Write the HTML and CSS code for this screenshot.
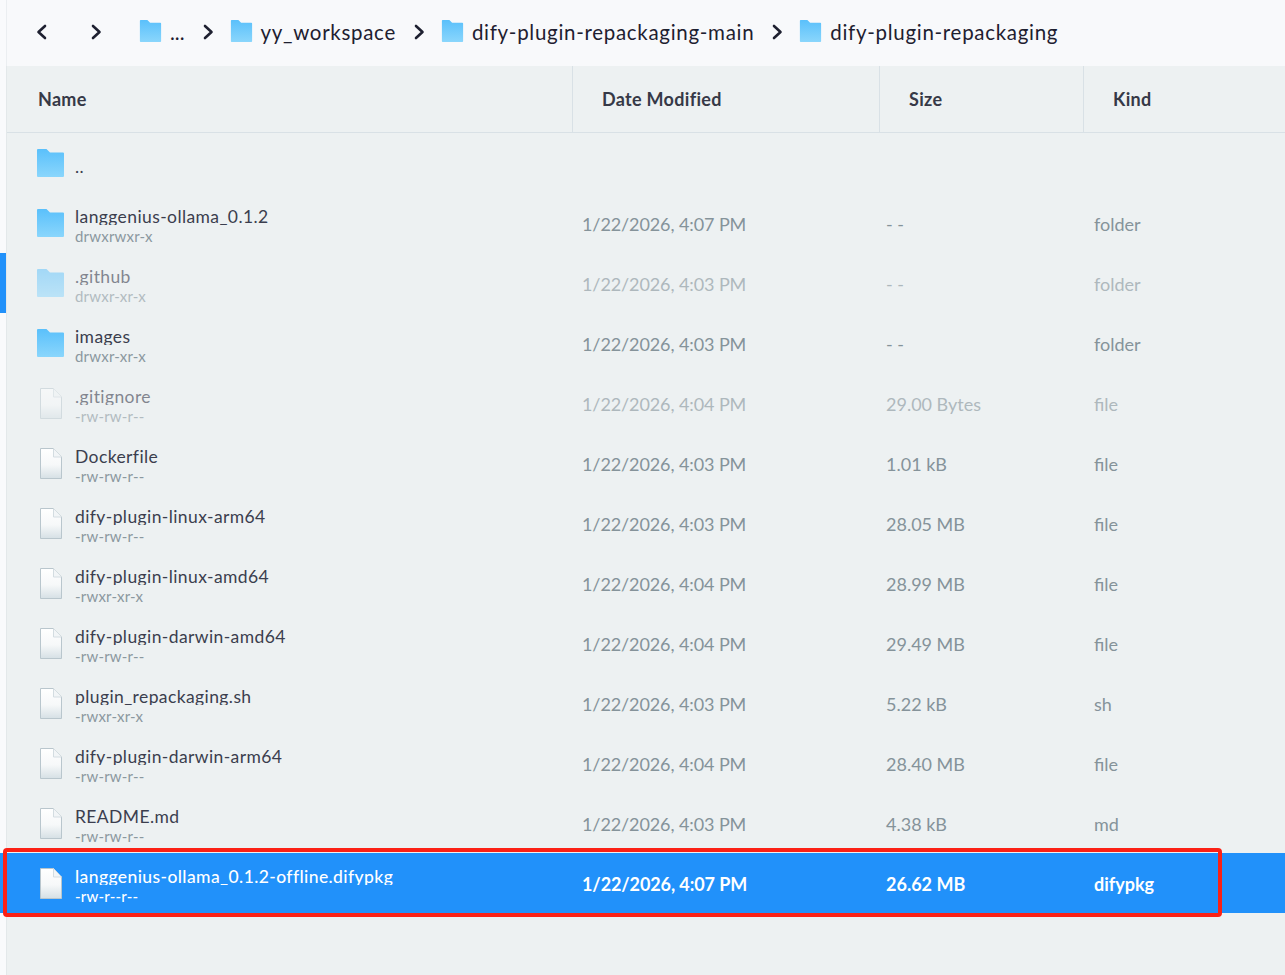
FILE: index.html
```html
<!DOCTYPE html>
<html lang="en">
<head>
<meta charset="utf-8">
<title>Files</title>
<link rel="stylesheet" href="styles.css">
</head>
<body>
<svg class="defs" width="0" height="0" aria-hidden="true">
  <defs>
    <linearGradient id="fg" x1="0" y1="0" x2="0" y2="1"><stop offset="0" stop-color="#5ac0fb"/><stop offset="1" stop-color="#8ad6fc"/></linearGradient>
    <linearGradient id="pg" x1="0" y1="0" x2="0" y2="1"><stop offset="0" stop-color="#ffffff"/><stop offset="0.55" stop-color="#f6f8f9"/><stop offset="1" stop-color="#d6e0e5"/></linearGradient>
    <symbol id="folder" viewBox="0 0 27 28"><path d="M1 0H9.500L13 3.500H26a1 1 0 0 1 1 1V27a1 1 0 0 1-1 1H1a1 1 0 0 1-1-1V1a1 1 0 0 1 1-1Z" fill="url(#fg)"/></symbol>
    <symbol id="file" viewBox="0 0 22 31"><path d="M.5.5H13.500L21.500 9V30.500H.5Z" fill="url(#pg)" stroke="#b9c6cd"/><path d="M13.500.5V9H21.500" fill="#f2f5f7" stroke="#d3dce1"/></symbol>
    <symbol id="chev" viewBox="0 0 12 16"><path d="M3 2L9.500 8L3 14" fill="none" stroke="currentColor" stroke-width="2.600" stroke-linecap="round" stroke-linejoin="round"/></symbol>
  </defs>
</svg>
<div class="app">
  <nav class="bar">
    <svg class="nav-btn back"><use href="#chev"/></svg>
    <svg class="nav-btn"><use href="#chev"/></svg>
    <div class="crumbs">
      <span class="crumb dots"><svg class="crumb-ic"><use href="#folder"/></svg>...</span>
      <svg class="sep"><use href="#chev"/></svg>
      <span class="crumb"><svg class="crumb-ic"><use href="#folder"/></svg>yy_workspace</span>
      <svg class="sep"><use href="#chev"/></svg>
      <span class="crumb"><svg class="crumb-ic"><use href="#folder"/></svg>dify-plugin-repackaging-main</span>
      <svg class="sep"><use href="#chev"/></svg>
      <span class="crumb"><svg class="crumb-ic"><use href="#folder"/></svg>dify-plugin-repackaging</span>
    </div>
  </nav>
  <main class="table">
    <header class="head">
      <div class="th">Name</div><div class="th">Date Modified</div><div class="th">Size</div><div class="th">Kind</div>
    </header>
    <div class="row">
      <div class="name"><svg class="ic-folder"><use href="#folder"/></svg><div class="label"><div class="fn">..</div></div></div>
      <div></div><div></div><div></div>
    </div>
    <div class="row">
      <div class="name"><svg class="ic-folder"><use href="#folder"/></svg><div class="label"><div class="fn">langgenius-ollama_0.1.2</div><div class="perm">drwxrwxr-x</div></div></div>
      <div class="cell">1/22/2026, 4:07 PM</div><div class="cell">- -</div><div class="cell">folder</div>
    </div>
    <div class="row dim active">
      <div class="name"><svg class="ic-folder"><use href="#folder"/></svg><div class="label"><div class="fn">.github</div><div class="perm">drwxr-xr-x</div></div></div>
      <div class="cell">1/22/2026, 4:03 PM</div><div class="cell">- -</div><div class="cell">folder</div>
    </div>
    <div class="row">
      <div class="name"><svg class="ic-folder"><use href="#folder"/></svg><div class="label"><div class="fn">images</div><div class="perm">drwxr-xr-x</div></div></div>
      <div class="cell">1/22/2026, 4:03 PM</div><div class="cell">- -</div><div class="cell">folder</div>
    </div>
    <div class="row dim">
      <div class="name"><svg class="ic-file"><use href="#file"/></svg><div class="label"><div class="fn">.gitignore</div><div class="perm">-rw-rw-r--</div></div></div>
      <div class="cell">1/22/2026, 4:04 PM</div><div class="cell">29.00 Bytes</div><div class="cell">file</div>
    </div>
    <div class="row">
      <div class="name"><svg class="ic-file"><use href="#file"/></svg><div class="label"><div class="fn">Dockerfile</div><div class="perm">-rw-rw-r--</div></div></div>
      <div class="cell">1/22/2026, 4:03 PM</div><div class="cell">1.01 kB</div><div class="cell">file</div>
    </div>
    <div class="row">
      <div class="name"><svg class="ic-file"><use href="#file"/></svg><div class="label"><div class="fn">dify-plugin-linux-arm64</div><div class="perm">-rw-rw-r--</div></div></div>
      <div class="cell">1/22/2026, 4:03 PM</div><div class="cell">28.05 MB</div><div class="cell">file</div>
    </div>
    <div class="row">
      <div class="name"><svg class="ic-file"><use href="#file"/></svg><div class="label"><div class="fn">dify-plugin-linux-amd64</div><div class="perm">-rwxr-xr-x</div></div></div>
      <div class="cell">1/22/2026, 4:04 PM</div><div class="cell">28.99 MB</div><div class="cell">file</div>
    </div>
    <div class="row">
      <div class="name"><svg class="ic-file"><use href="#file"/></svg><div class="label"><div class="fn">dify-plugin-darwin-amd64</div><div class="perm">-rw-rw-r--</div></div></div>
      <div class="cell">1/22/2026, 4:04 PM</div><div class="cell">29.49 MB</div><div class="cell">file</div>
    </div>
    <div class="row">
      <div class="name"><svg class="ic-file"><use href="#file"/></svg><div class="label"><div class="fn">plugin_repackaging.sh</div><div class="perm">-rwxr-xr-x</div></div></div>
      <div class="cell">1/22/2026, 4:03 PM</div><div class="cell">5.22 kB</div><div class="cell">sh</div>
    </div>
    <div class="row">
      <div class="name"><svg class="ic-file"><use href="#file"/></svg><div class="label"><div class="fn">dify-plugin-darwin-arm64</div><div class="perm">-rw-rw-r--</div></div></div>
      <div class="cell">1/22/2026, 4:04 PM</div><div class="cell">28.40 MB</div><div class="cell">file</div>
    </div>
    <div class="row">
      <div class="name"><svg class="ic-file"><use href="#file"/></svg><div class="label"><div class="fn">README.md</div><div class="perm">-rw-rw-r--</div></div></div>
      <div class="cell">1/22/2026, 4:03 PM</div><div class="cell">4.38 kB</div><div class="cell">md</div>
    </div>
    <div class="row selected">
      <div class="name"><svg class="ic-file"><use href="#file"/></svg><div class="label"><div class="fn">langgenius-ollama_0.1.2-offline.difypkg</div><div class="perm">-rw-r--r--</div></div></div>
      <div class="cell">1/22/2026, 4:07 PM</div><div class="cell">26.62 MB</div><div class="cell">difypkg</div>
      <div class="callout"></div>
    </div>
  </main>
</div>
</body>
</html>
```
FILE: styles.css
```css
* { box-sizing: border-box; }
html, body { margin: 0; height: 100%; }
body {
  background: #f9fafc;
  color: #2f3241;
  font-family: "Lato", "Noto Sans", sans-serif;
  overflow: hidden;
}
.defs { position: absolute; }
.app { height: 975px; display: flex; flex-direction: column; }

.bar {
  height: 66px;
  margin-left: 6px;
  border-left: 1px solid #ebeef1;
  display: flex;
  align-items: center;
  background: #f8f9fb;
  color: #1e2030;
  padding: 0 0 2px 29px;
}
.nav-btn { width: 12px; height: 16px; flex: none; margin-right: 37px; }
.nav-btn.back { transform: scaleX(-1); margin-right: 42px; }
.crumbs { display: flex; align-items: center; }
.crumb { display: flex; align-items: center; font-size: 20.500px; line-height: 26px; white-space: nowrap; letter-spacing: .7px; }
.crumb.dots { letter-spacing: 0; }
.crumb-ic { width: 23px; height: 22px; margin: -2px 8px 0 0; flex: none; }
.sep { width: 12px; height: 16px; margin: 0 16px 0 17px; flex: none; }

.table {
  flex: 1;
  margin-left: 6px;
  background: #edf1f2;
  border-left: 1px solid #e3e8ea;
}
.head, .row {
  display: grid;
  grid-template-columns: 565px 307px 204px 1fr;
}
.head { height: 67px; border-bottom: 1px solid #d9e1e6; }
.th {
  display: flex;
  align-items: center;
  padding-left: 29px;
  font-size: 18px;
  font-weight: 700;
  letter-spacing: .3px;
  color: #363947;
  border-left: 1px solid #d9e1e6;
}
.th:first-child { border-left: 0; padding-left: 31px; }

.row { height: 60px; position: relative; align-items: center; }
.name { display: flex; align-items: center; padding-left: 30px; height: 100%; }
.ic-folder { width: 27px; height: 28px; flex: none; margin-right: 11px; }
.ic-file { width: 22px; height: 31px; flex: none; margin: 0 13px 0 3px; }
.label { min-width: 0; padding-top: 5px; }
.fn { font-size: 17.500px; line-height: 20px; height: 18px; overflow: hidden; white-space: nowrap; color: #3b3e4e; letter-spacing: .4px; }
.perm { font-size: 15px; line-height: 18px; color: #8b989f; margin-top: 2px; white-space: nowrap; letter-spacing: .2px; }
.cell { padding: 1px 0 0 10px; font-size: 18px; color: #85939a; white-space: nowrap; }
.cell:nth-child(2) { letter-spacing: -.1px; }
.cell:nth-child(3) { padding-left: 7px; }
.cell:nth-child(4) { padding-left: 11px; }

.dim .fn, .dim .perm, .dim .cell { opacity: .6; }
.dim svg { opacity: .5; }
.active { margin-left: -7px; padding-left: 7px; box-shadow: inset 6px 0 0 #2191fa; }

.selected { margin-left: -7px; padding-left: 7px; background: #2191fa; }
.selected .fn, .selected .perm, .selected .cell { color: #fff; font-weight: 500; }
.selected .cell { font-weight: 700; }
.callout {
  position: absolute;
  left: 3px;
  top: -5px;
  width: 1219px;
  height: 69px;
  border: 4px solid #fb2116;
  border-radius: 4px;
  pointer-events: none;
}
```
